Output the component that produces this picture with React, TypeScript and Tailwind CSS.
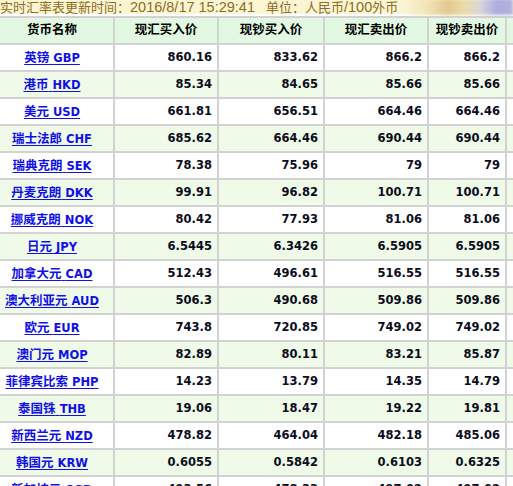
import React from "react";

type Row = [string, string, string, string, string, string];

const rows: Row[] = [
  ["英镑", "GBP", "860.16", "833.62", "866.2", "866.2"],
  ["港币", "HKD", "85.34", "84.65", "85.66", "85.66"],
  ["美元", "USD", "661.81", "656.51", "664.46", "664.46"],
  ["瑞士法郎", "CHF", "685.62", "664.46", "690.44", "690.44"],
  ["瑞典克朗", "SEK", "78.38", "75.96", "79", "79"],
  ["丹麦克朗", "DKK", "99.91", "96.82", "100.71", "100.71"],
  ["挪威克朗", "NOK", "80.42", "77.93", "81.06", "81.06"],
  ["日元", "JPY", "6.5445", "6.3426", "6.5905", "6.5905"],
  ["加拿大元", "CAD", "512.43", "496.61", "516.55", "516.55"],
  ["澳大利亚元", "AUD", "506.3", "490.68", "509.86", "509.86"],
  ["欧元", "EUR", "743.8", "720.85", "749.02", "749.02"],
  ["澳门元", "MOP", "82.89", "80.11", "83.21", "85.87"],
  ["菲律宾比索", "PHP", "14.23", "13.79", "14.35", "14.79"],
  ["泰国铢", "THB", "19.06", "18.47", "19.22", "19.81"],
  ["新西兰元", "NZD", "478.82", "464.04", "482.18", "485.06"],
  ["韩国元", "KRW", "0.6055", "0.5842", "0.6103", "0.6325"],
  ["新加坡元", "SGD", "493.56", "478.33", "497.02", "497.02"],
];

const headers = ["货币名称", "现汇买入价", "现钞买入价", "现汇卖出价", "现钞卖出价"];

export default function App() {
  return (
    <div className="w-[513px] h-[486px] overflow-hidden bg-white">
      <div className="flex h-[14px] items-center bg-[#fcf5d4] text-[#8c6d22] text-[13px] leading-[14px] whitespace-nowrap font-['Liberation_Sans','Noto_Sans_CJK_SC',sans-serif]">
        <span className="shrink-0">
          实时汇率表更新时间：<span className="text-[14.5px]">2016/8/17 15:29:41</span>
          <span className="ml-[11px]">单位：人民币<span className="text-[14.5px]">/100</span>外币</span>
        </span>
        <div className="ml-auto h-[16px] w-[108px] shrink-0 rounded-l-full bg-[linear-gradient(90deg,#fbf2d2_0%,#f2e4b8_20%,#e2c98f_40%,#eadcaa_55%,#d8d6da_70%,#ababdf_85%,#b3b3dc_100%)] blur-[1.5px]" />
      </div>
      <div className="h-[2px]" />
      <table className="-ml-[11px] w-[540px] table-fixed border-separate border-spacing-[2px] bg-[#d2d2d2] text-[11.5px] font-bold font-['DejaVu_Sans','Noto_Sans_CJK_SC',sans-serif]">
        <colgroup>
          <col className="w-[122px]" />
          <col className="w-[102px]" />
          <col className="w-[104px]" />
          <col className="w-[102px]" />
          <col className="w-[76px]" />
          <col className="w-[20px]" />
        </colgroup>
        <thead>
          <tr>
            {headers.map((h) => (
              <th
                key={h}
                className="h-[25px] p-0 bg-[#e2f8e2] text-center text-[12.5px] font-bold text-black"
              >
                {h}
              </th>
            ))}
            <th className="h-[25px] p-0 bg-[#e2f8e2]" />
          </tr>
        </thead>
        <tbody>
          {rows.map((r, i) => {
            const bg = i % 2 === 1 ? "bg-[#effbe8]" : "bg-white";
            return (
              <tr key={r[1]}>
                <td className={`h-[25px] p-0 pt-[1px] text-center ${bg}`}>
                  <a className="text-[#1010e8] underline underline-offset-[2px] cursor-pointer">
                    <span className="text-[12.5px]">{r[0]}</span> {r[1]}
                  </a>
                </td>
                {r.slice(2).map((v, j) => (
                  <td key={j} className={`h-[25px] p-0 pt-[1px] pr-[5px] text-right text-[#0c0c1c] ${bg}`}>
                    {v}
                  </td>
                ))}
                <td className={`h-[25px] p-0 ${bg}`} />
              </tr>
            );
          })}
        </tbody>
      </table>
    </div>
  );
}
